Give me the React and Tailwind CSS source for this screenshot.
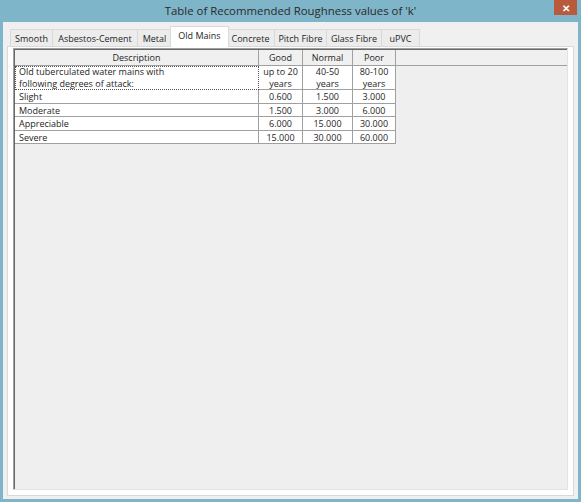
import React from "react";

const tabs = [
  { label: "Smooth", w: 43 },
  { label: "Asbestos-Cement", w: 86 },
  { label: "Metal", w: 35 },
  { label: "Old Mains", w: 55, active: true },
  { label: "Concrete", w: 49 },
  { label: "Pitch Fibre", w: 53 },
  { label: "Glass Fibre", w: 56 },
  { label: "uPVC", w: 39 },
];

const rows = [
  ["Slight", "0.600", "1.500", "3.000", "h-[14px]"],
  ["Moderate", "1.500", "3.000", "6.000", "h-[13px]"],
  ["Appreciable", "6.000", "15.000", "30.000", "h-[14px]"],
  ["Severe", "15.000", "30.000", "60.000", "h-[13px]"],
];

const App = () => {
  return (
    <div className="flex h-[502px] w-[581px] flex-col bg-[#7fb5c9] font-['Open_Sans',sans-serif] text-[#1e1e1e]">
      <div className="relative flex h-[22px] shrink-0 items-center justify-center">
        <span className="text-[11.4px] leading-none text-[#2a2a2a]">
          Table of Recommended Roughness values of 'k'
        </span>
        <div className="absolute right-[4px] top-0 flex h-[15px] w-[23px] items-center justify-center bg-[#b85b3c] text-[10px] font-bold leading-none text-white">
          ✕
        </div>
      </div>
      <div className="mx-[3px] mb-[3px] flex flex-1 flex-col bg-[#f0f0f0] px-[4px] pb-[3px] pt-[4px]">
        <div className="flex h-[20px] items-end pl-[3px]">
          {tabs.map((t) =>
            t.active ? (
              <div
                key={t.label}
                style={{ width: t.w + 4 }}
                className="relative z-10 -mx-[2px] -mb-px flex h-[21px] items-start justify-center border border-b-0 border-[#d9d9d9] bg-white pt-[3px] text-[9px] leading-[11px]"
              >
                {t.label}
              </div>
            ) : (
              <div
                key={t.label}
                style={{ width: t.w }}
                className="-ml-px flex h-[17px] items-center justify-center border border-b-0 border-[#d9d9d9] bg-[#ececec] text-[9px] leading-none first:ml-0"
              >
                {t.label}
              </div>
            )
          )}
        </div>
        <div className="flex flex-1 flex-col border border-[#d9d9d9] bg-white px-[5px] pb-[5px] pt-[1px]">
          <div className="flex flex-1 flex-col border border-l-[#a0a0a0] border-t-[#a0a0a0] border-r-[#e3e3e3] border-b-[#e3e3e3] bg-[#efefef]">
            <div className="flex flex-1 flex-col border-l border-t border-l-[#696969] border-t-[#696969] text-[9px] leading-[11px]">
              <div className="flex h-[16px] border-b border-[#a0a0a0] bg-[#f0f0f0]">
                <div className="flex w-[244px] items-center justify-center border-r border-[#a0a0a0]">
                  Description
                </div>
                <div className="flex w-[44px] items-center justify-center border-r border-[#a0a0a0]">
                  Good
                </div>
                <div className="flex w-[50px] items-center justify-center border-r border-[#a0a0a0]">
                  Normal
                </div>
                <div className="flex w-[43px] items-center justify-center border-r border-[#a0a0a0]">
                  Poor
                </div>
              </div>
              <div className="flex h-[24px] leading-[12px]">
                <div className="flex w-[244px] flex-col justify-center border border-dotted border-[#555] bg-white pl-[3px]">
                  <span>Old tuberculated water mains with</span>
                  <span>following degrees of attack:</span>
                </div>
                <div className="flex w-[44px] flex-col items-center justify-center border-b border-r border-[#a0a0a0] bg-white">
                  <span>up to 20</span>
                  <span>years</span>
                </div>
                <div className="flex w-[50px] flex-col items-center justify-center border-b border-r border-[#a0a0a0] bg-white">
                  <span>40-50</span>
                  <span>years</span>
                </div>
                <div className="flex w-[43px] flex-col items-center justify-center border-b border-r border-[#a0a0a0] bg-white">
                  <span>80-100</span>
                  <span>years</span>
                </div>
              </div>
              {rows.map(([d, g, n, p, h]) => (
                <div key={d} className={`flex ${h}`}>
                  <div className="flex w-[244px] items-center border-b border-r border-[#a0a0a0] bg-white pl-[4px]">
                    {d}
                  </div>
                  <div className="flex w-[44px] items-center justify-center border-b border-r border-[#a0a0a0] bg-white">
                    {g}
                  </div>
                  <div className="flex w-[50px] items-center justify-center border-b border-r border-[#a0a0a0] bg-white">
                    {n}
                  </div>
                  <div className="flex w-[43px] items-center justify-center border-b border-r border-[#a0a0a0] bg-white">
                    {p}
                  </div>
                </div>
              ))}
            </div>
          </div>
        </div>
      </div>
    </div>
  );
};

export default App;
